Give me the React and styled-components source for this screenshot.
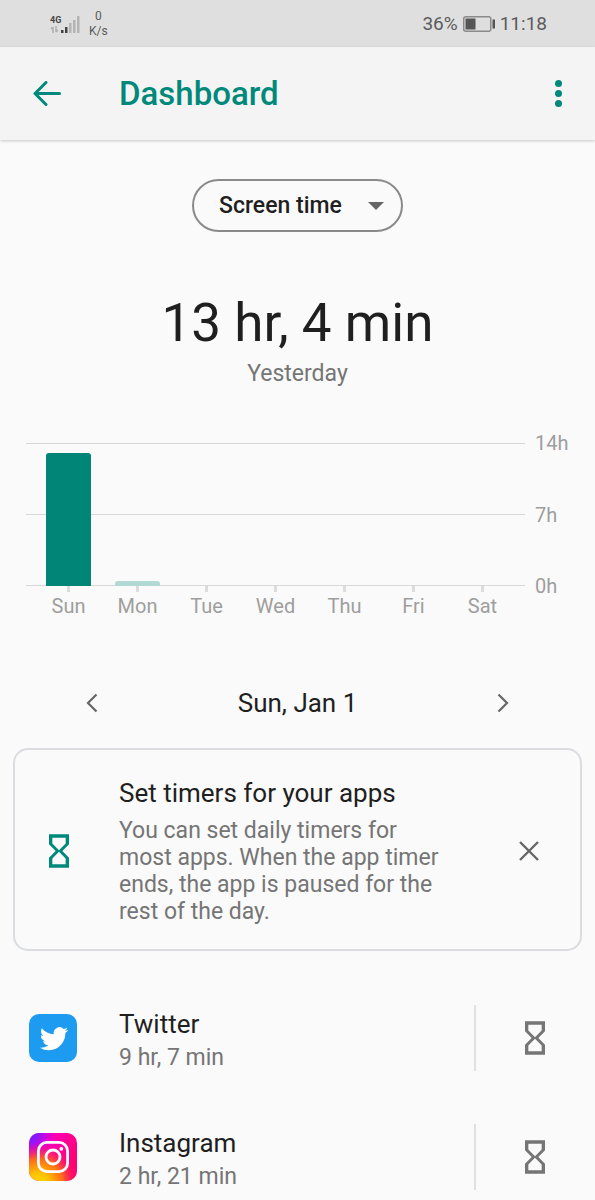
import React, { useState } from 'react';
import styled, { createGlobalStyle } from 'styled-components';
import { MdHourglassEmpty } from 'react-icons/md';

const GlobalStyle = createGlobalStyle`
  :root {
    --primary: #00897b;
    --text: #1f1f1f;
    --text-sub: #757575;
    --gray: #9e9e9e;
    --line: #dcdcdc;
    --bg: #fafafa;
  }

  *, *::before, *::after {
    box-sizing: border-box;
  }

  body {
    margin: 0;
    background: var(--bg);
    color: var(--text);
    font-family: Roboto, 'Liberation Sans', sans-serif;
  }

  button {
    display: inline-flex;
    align-items: center;
    justify-content: center;
    padding: 0;
    border: 0;
    background: none;
    color: inherit;
    font: inherit;
    cursor: pointer;
  }

  h1, h2, h3, p, ul {
    margin: 0;
    padding: 0;
    font-weight: 400;
  }

  svg {
    display: block;
  }
`;

/* status bar */

const StyledStatusBar = styled.div`
  display: flex;
  align-items: center;
  justify-content: space-between;
  height: 47px;
  padding: 0 48px 0 50px;
  background: #dfdfdf;
  color: #5c5c5c;
  font-size: 19px;

  .status-group {
    display: flex;
    align-items: center;
    gap: 5px;
  }

  .network {
    display: flex;
    align-items: flex-end;
    margin-right: 4px;
  }

  .network-type {
    width: 11px;
    font-size: 9px;
    font-weight: 700;
    line-height: 10px;
    color: #444;
  }

  .speed {
    font-size: 12px;
    line-height: 15px;
    text-align: center;
  }
`;

const StatusBar = () => (
  <StyledStatusBar>
    <div className="status-group">
      <div className="network">
        <div className="network-type">
          4G
          <svg width="10" height="8" viewBox="0 0 10 8" fill="none" stroke="#b0b0b0" strokeWidth="1.5">
            <path d="M3 8V2M1 4l2-2M6 1v6M8 5L6 7" />
          </svg>
        </div>
        <svg width="19" height="17" viewBox="0 0 19 17">
          <path d="M0 14h2.5v3H0zM4 11h2.5v6H4z" fill="#444" />
          <path d="M8 7h2.5v10H8zM12 4h2.5v13H12zM16 0h2.5v17H16z" fill="#b4b4b4" />
        </svg>
      </div>
      <div className="speed">
        <div>0</div>
        <div>K/s</div>
      </div>
    </div>
    <div className="status-group">
      <span>36%</span>
      <svg width="32" height="16" viewBox="0 0 32 16">
        <rect x="0.75" y="0.75" width="27" height="14.5" rx="2" fill="none" stroke="#8a8a8a" strokeWidth="1.5" />
        <path d="M2.5 2.5h10v11h-10zM29.5 3.5h2.5v9h-2.5z" fill="#555" />
      </svg>
      <span>11:18</span>
    </div>
  </StyledStatusBar>
);

/* app bar */

const StyledAppBar = styled.header`
  display: flex;
  align-items: center;
  height: 93px;
  padding: 0 17px 0 27px;
  background: #f4f4f4;
  color: var(--primary);
  box-shadow: 0 1px 3px rgba(0, 0, 0, 0.2);

  h1 {
    flex: 1;
    margin-left: 52px;
    font-size: 33px;
    font-weight: 500;
    line-height: 40px;
  }
`;

const IconButton = styled.button`
  flex: none;
  width: 40px;
  height: 40px;
  color: ${({ $color }) => $color || 'inherit'};
`;

const AppBar = () => (
  <StyledAppBar>
    <IconButton aria-label="Back">
      <svg width="30" height="26" viewBox="0 0 30 26" fill="none" stroke="currentColor" strokeWidth="3" strokeLinecap="round" strokeLinejoin="round">
        <path d="M27.5 12.5H3M14 1.5l-11 11 11 11" />
      </svg>
    </IconButton>
    <h1>Dashboard</h1>
    <IconButton aria-label="More options">
      <svg width="8" height="28" viewBox="0 0 8 28" fill="currentColor">
        <circle cx="4.5" cy="3.5" r="3.5" />
        <circle cx="4.5" cy="13.5" r="3.5" />
        <circle cx="4.5" cy="23.5" r="3.5" />
      </svg>
    </IconButton>
  </StyledAppBar>
);

/* summary */

const StyledSummary = styled.section`
  display: flex;
  flex-direction: column;
  align-items: center;
  padding-top: 39px;

  h2 {
    margin-top: 58px;
    font-size: 53px;
    line-height: 66px;
  }

  p {
    margin-top: 4px;
    color: var(--text-sub);
    font-size: 23px;
    line-height: 28px;
  }
`;

const SelectWrapper = styled.div`
  display: grid;
  align-items: center;

  select,
  svg {
    grid-area: 1 / 1;
  }

  select {
    appearance: none;
    height: 53px;
    padding: 0 59px 0 25px;
    border: 2px solid #8a8a8a;
    border-radius: 27px;
    background: transparent;
    color: #1f1f1f;
    font: 500 23px Roboto, sans-serif;
  }

  svg {
    justify-self: end;
    margin-right: 19px;
    pointer-events: none;
  }
`;

const Summary = () => {
  const [metric, setMetric] = useState('Screen time');

  return (
    <StyledSummary>
      <SelectWrapper>
        <select aria-label="Metric" value={metric} onChange={(e) => setMetric(e.target.value)}>
          <option>Screen time</option>
        </select>
        <svg width="16" height="8" viewBox="0 0 16 8">
          <path d="M0 0h16L8 8z" fill="#666" />
        </svg>
      </SelectWrapper>
      <h2>13 hr, 4 min</h2>
      <p>Yesterday</p>
    </StyledSummary>
  );
};

/* chart */

const MAX_HOURS = 14;

const days = [
  { name: 'Sun', hours: 13.07, active: true },
  { name: 'Mon', hours: 0.5 },
  { name: 'Tue', hours: 0 },
  { name: 'Wed', hours: 0 },
  { name: 'Thu', hours: 0 },
  { name: 'Fri', hours: 0 },
  { name: 'Sat', hours: 0 },
];

const StyledChart = styled.section`
  display: grid;
  grid-template-columns: 1fr 34px;
  grid-template-rows: 143px auto;
  column-gap: 10px;
  margin-top: 55px;
  padding: 0 26px;
  color: var(--gray);
  font-size: 20px;
  line-height: 24px;
`;

const GridLines = styled.div`
  grid-area: 1 / 1;
  display: flex;
  flex-direction: column;
  justify-content: space-between;

  span {
    height: 1px;
    background: #d8d8d8;
  }
`;

const Bars = styled.div`
  grid-area: 1 / 1;
  display: grid;
  grid-template-columns: repeat(7, 1fr);
  align-items: end;
  justify-items: center;
  padding: 0 8px;
`;

const Bar = styled.div`
  width: 45px;
  border-radius: 3px 3px 0 0;
  background: ${({ $active }) => ($active ? '#008577' : '#b2dad5')};
`;

const Scale = styled.div`
  grid-area: 1 / 2;
  display: flex;
  flex-direction: column;
  justify-content: space-between;
  margin: -12px 0;
`;

const DayLabels = styled.div`
  grid-area: 2 / 1;
  display: grid;
  grid-template-columns: repeat(7, 1fr);
  padding: 0 8px;
  text-align: center;

  span::before {
    content: '';
    display: block;
    width: 3px;
    height: 6px;
    margin: 0 auto 2px;
    background: var(--line);
  }
`;

const Chart = () => (
  <StyledChart>
    <GridLines>
      <span />
      <span />
      <span />
    </GridLines>
    <Bars>
      {days.map((day) => (
        <Bar key={day.name} $active={day.active} style={{ height: `${(day.hours / MAX_HOURS) * 100}%` }} />
      ))}
    </Bars>
    <Scale>
      <span>14h</span>
      <span>7h</span>
      <span>0h</span>
    </Scale>
    <DayLabels>
      {days.map((day) => (
        <span key={day.name}>{day.name}</span>
      ))}
    </DayLabels>
  </StyledChart>
);

/* date switcher */

const StyledDateNav = styled.nav`
  display: flex;
  align-items: center;
  justify-content: space-between;
  margin-top: 65px;
  padding: 0 72px;
  font-size: 26px;
  line-height: 40px;
`;

const DateNav = () => (
  <StyledDateNav>
    <IconButton $color="#666" aria-label="Previous day">
      <svg width="12" height="20" viewBox="0 0 12 20" fill="none" stroke="currentColor" strokeWidth="2.2">
        <path d="M10.5 1.5L2 10l8.5 8.5" />
      </svg>
    </IconButton>
    <span>Sun, Jan 1</span>
    <IconButton $color="#666" aria-label="Next day">
      <svg width="12" height="20" viewBox="0 0 12 20" fill="none" stroke="currentColor" strokeWidth="2.2">
        <path d="M1.5 1.5L10 10l-8.5 8.5" />
      </svg>
    </IconButton>
  </StyledDateNav>
);

/* timer tip */

const StyledTip = styled.section`
  display: flex;
  align-items: center;
  margin: 25px 13px 0;
  padding: 26px 31px 24px 24px;
  border: 2px solid #dadce0;
  border-radius: 15px;

  .tip-icon {
    flex: none;
    color: var(--primary);
  }

  .tip-body {
    flex: 1;
    margin: 0 66px 0 40px;
  }

  h3 {
    font-size: 26px;
    line-height: 34px;
  }

  p {
    margin-top: 7px;
    color: var(--text-sub);
    font-size: 23px;
    line-height: 27px;
  }
`;

const TimerTip = ({ onClose }) => (
  <StyledTip>
    <MdHourglassEmpty className="tip-icon" size={40} />
    <div className="tip-body">
      <h3>Set timers for your apps</h3>
      <p>You can set daily timers for most apps. When the app timer ends, the app is paused for the rest of the day.</p>
    </div>
    <IconButton $color="#666" aria-label="Dismiss" onClick={onClose}>
      <svg width="20" height="20" viewBox="0 0 20 20" fill="none" stroke="currentColor" strokeWidth="2.4">
        <path d="M1 1l18 18M19 1L1 19" />
      </svg>
    </IconButton>
  </StyledTip>
);

/* app list */

const TwitterLogo = () => (
  <svg width="48" height="48" viewBox="0 0 48 48">
    <rect width="48" height="48" rx="10" fill="#1d9bf0" />
    <path
      transform="translate(10.9 10.6) scale(1.18)"
      fill="#fff"
      d="M23.95 4.57a10 10 0 0 1-2.82.77 4.96 4.96 0 0 0 2.16-2.72c-.95.55-2 .96-3.13 1.18a4.92 4.92 0 0 0-8.38 4.48C7.69 8.1 4.07 6.13 1.64 3.16a4.82 4.82 0 0 0-.67 2.48c0 1.71.87 3.21 2.19 4.1a4.9 4.9 0 0 1-2.23-.62v.06a4.92 4.92 0 0 0 3.95 4.83 5 5 0 0 1-2.21.08 4.94 4.94 0 0 0 4.6 3.42A9.87 9.87 0 0 1 0 19.54a14 14 0 0 0 7.55 2.21c9.05 0 14-7.5 14-13.98 0-.21 0-.42-.02-.63a9.94 9.94 0 0 0 2.46-2.55z"
    />
  </svg>
);

const InstagramLogo = () => (
  <svg width="48" height="48" viewBox="0 0 48 48">
    <defs>
      <linearGradient id="ig-base" x1="0" y1="0" x2="1" y2="0.5">
        <stop offset="0" stopColor="#d400e8" />
        <stop offset="0.5" stopColor="#ff00b0" />
        <stop offset="1" stopColor="#ff0072" />
      </linearGradient>
      <radialGradient id="ig-purple" cx="0" cy="0" r="0.55">
        <stop offset="0" stopColor="#6a1bff" />
        <stop offset="0.35" stopColor="#7f1cff" stopOpacity="0.85" />
        <stop offset="1" stopColor="#c800f0" stopOpacity="0" />
      </radialGradient>
      <radialGradient id="ig-warm" cx="0.2" cy="1.05" r="0.85">
        <stop offset="0" stopColor="#ffd600" />
        <stop offset="0.25" stopColor="#ffc400" />
        <stop offset="0.6" stopColor="#ff6a1a" />
        <stop offset="1" stopColor="#ff0072" stopOpacity="0" />
      </radialGradient>
    </defs>
    <rect width="48" height="48" rx="10" fill="url(#ig-base)" />
    <rect width="48" height="48" rx="10" fill="url(#ig-purple)" />
    <rect width="48" height="48" rx="10" fill="url(#ig-warm)" />
    <g fill="none" stroke="#fff" strokeWidth="2.8">
      <rect x="9.4" y="9.4" width="29.2" height="29.2" rx="8.5" />
      <circle cx="24" cy="24" r="7" />
    </g>
    <circle cx="32.3" cy="15.8" r="1.9" fill="#fff" />
  </svg>
);

const apps = [
  { name: 'Twitter', time: '9 hr, 7 min', Logo: TwitterLogo },
  { name: 'Instagram', time: '2 hr, 21 min', Logo: InstagramLogo },
];

const AppList = styled.ul`
  display: flex;
  flex-direction: column;
  gap: 53px;
  padding: 54px 40px 10px 29px;
  list-style: none;
`;

const StyledAppItem = styled.li`
  display: flex;
  align-items: center;
  height: 66px;

  .app-body {
    flex: 1;
    margin-left: 42px;
    padding-top: 3px;
  }

  .app-time {
    margin-top: 2px;
    color: var(--text-sub);
    font-size: 23px;
    line-height: 30px;
  }

  h3 {
    font-size: 26px;
    line-height: 34px;
  }

  .app-action {
    display: flex;
    align-items: center;
    height: 100%;
    padding-left: 39px;
    border-left: 2px solid #e0e0e0;
  }
`;

const AppItem = ({ app }) => (
  <StyledAppItem>
    <app.Logo />
    <div className="app-body">
      <h3>{app.name}</h3>
      <p className="app-time">{app.time}</p>
    </div>
    <div className="app-action">
      <IconButton $color="#757575" aria-label={`Set timer for ${app.name}`}>
        <MdHourglassEmpty size={40} />
      </IconButton>
    </div>
  </StyledAppItem>
);

const App = () => {
  const [showTip, setShowTip] = useState(true);

  return (
    <>
      <GlobalStyle />
      <StatusBar />
      <AppBar />
      <main>
        <Summary />
        <Chart />
        <DateNav />
        {showTip && <TimerTip onClose={() => setShowTip(false)} />}
        <AppList>
          {apps.map((app) => (
            <AppItem key={app.name} app={app} />
          ))}
        </AppList>
      </main>
    </>
  );
};

export default App;
